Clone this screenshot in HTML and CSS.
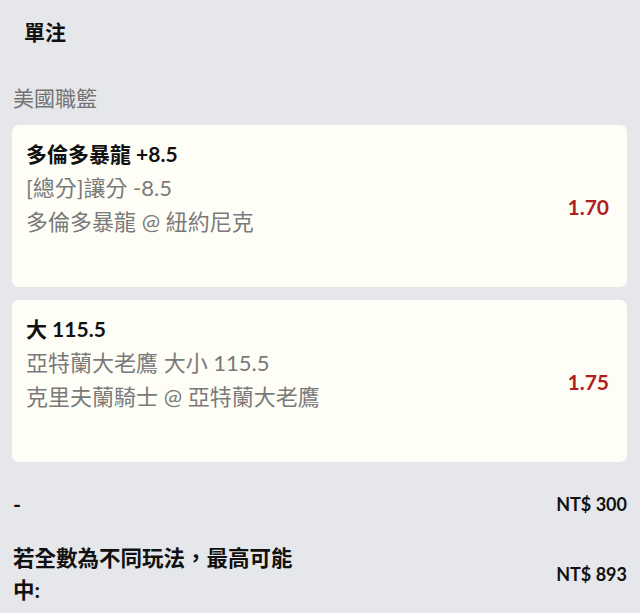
FILE: index.html
```html
<!DOCTYPE html>
<html lang="zh-Hant">
<head>
    <meta charset="UTF-8" />
    <title>單注</title>
    <link rel="stylesheet" href="styles.css">
</head>
<body>
    <div class="slip">
        <h1 class="slip-title">單注</h1>
        <div class="league">美國職籃</div>

        <div class="bet-card">
            <div class="bet-info">
                <div class="bet-pick">多倫多暴龍 +8.5</div>
                <div class="bet-line">[總分]讓分 -8.5</div>
                <div class="bet-line">多倫多暴龍 @ 紐約尼克</div>
            </div>
            <div class="bet-odds">1.70</div>
        </div>

        <div class="bet-card">
            <div class="bet-info">
                <div class="bet-pick">大 115.5</div>
                <div class="bet-line">亞特蘭大老鷹 大小 115.5</div>
                <div class="bet-line">克里夫蘭騎士 @ 亞特蘭大老鷹</div>
            </div>
            <div class="bet-odds">1.75</div>
        </div>

        <div class="summary-row">
            <div class="summary-label">-</div>
            <div class="summary-value">NT$ 300</div>
        </div>
        <div class="summary-row summary-row-win">
            <div class="summary-label">若全數為不同玩法，最高可能中:</div>
            <div class="summary-value">NT$ 893</div>
        </div>
    </div>
</body>
</html>
```

FILE: styles.css
```css
html {
    height: 100%;
}
body {
    margin: 0;
    padding: 0;
    background: #e6e7ea;
    font-family: Lato, "Noto Sans CJK TC", sans-serif;
    color: #111;
}
.slip {
    padding-bottom: 20px;
}
.slip-title {
    margin: 0;
    padding: 12px 24px;
    font-size: 21px;
    line-height: 40px;
    font-weight: 700;
}
.league {
    margin-top: 17px;
    padding: 0 13px;
    font-size: 21px;
    line-height: 34px;
    color: #737373;
}
.bet-card {
    display: flex;
    align-items: center;
    margin: 10px 13px 3px 12px;
    padding: 12px 18px 12px 14px;
    min-height: 162px;
    box-sizing: border-box;
    background: #fefef6;
    border-radius: 7px;
}
.bet-card + .bet-card {
    margin-top: 13px;
}
.bet-info {
    flex: 1;
    align-self: flex-start;
}
.bet-pick {
    font-size: 21px;
    line-height: 34px;
    font-weight: 700;
}
.bet-line {
    font-size: 22px;
    line-height: 34px;
    color: #7a7a7a;
}
.bet-odds {
    font-size: 21px;
    font-weight: 700;
    color: #b01e1e;
}
.summary-row {
    display: flex;
    align-items: center;
    justify-content: space-between;
    margin-top: 25px;
    padding: 0 13px;
}
.summary-row-win {
    margin-top: 21px;
}
.summary-label {
    max-width: 295px;
    font-size: 21.5px;
    line-height: 34px;
    font-weight: 700;
}
.summary-row-win .summary-label {
    line-height: 32px;
}
.summary-value {
    font-size: 18px;
    font-weight: 700;
}
```
